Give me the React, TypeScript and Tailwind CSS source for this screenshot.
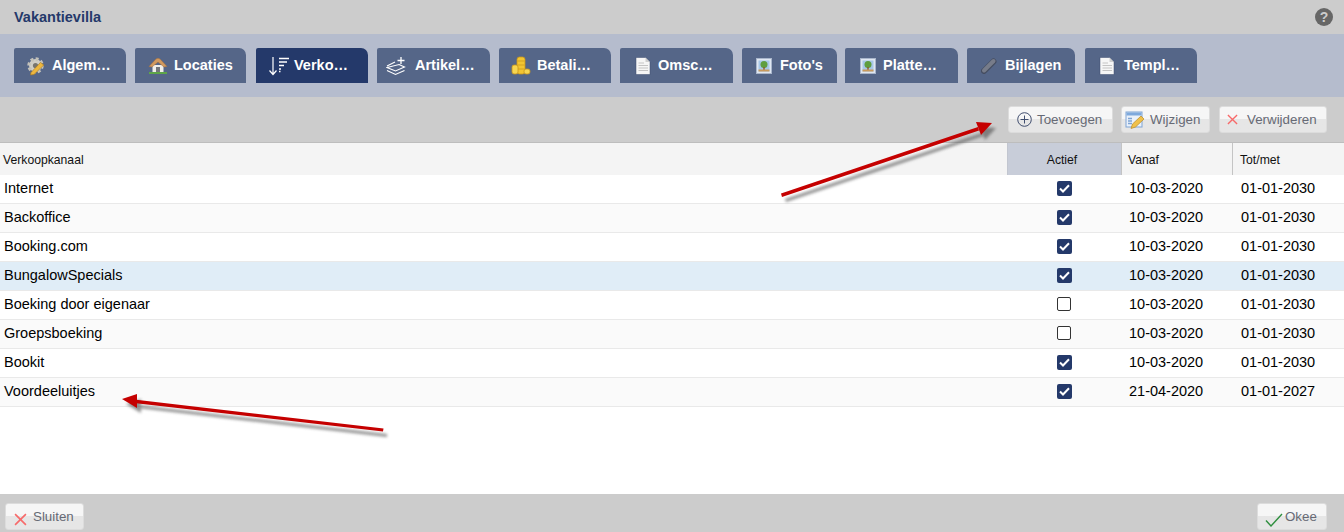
import type { ReactNode } from 'react'

const NAVY = '#24396a'

function Gear() {
  return (
    <svg width="20" height="20" viewBox="0 0 20 20">
      <circle cx="9.5" cy="9.5" r="6.5" fill="#cfcdc6" stroke="#c4c2ba" strokeWidth="3.4" strokeDasharray="2.8 2.2" />
      <circle cx="9.5" cy="9.5" r="2.6" fill="#77756f" />
      <path d="M5 16.5 L14.5 6.5 L17.8 9 L8 18.5 L4.5 19 Z" fill="#edb73f" stroke="#a8781c" strokeWidth="0.6" />
    </svg>
  )
}

function House() {
  return (
    <svg width="20" height="20" viewBox="0 0 20 20">
      <path d="M4.5 9 H15.5 V16 H4.5 Z" fill="#f1efe9" />
      <path d="M8 11 H12 V16 H8 Z" fill="#74767a" />
      <path d="M1 10.5 L8 3 Q10 1.5 12 3 L19 10.5 L16 11 L10 6 L4 11 Z" fill="#d29a5e" stroke="#a9713a" strokeWidth="0.5" />
      <path d="M1 16 H19 V18 H1 Z" fill="#5ea548" />
    </svg>
  )
}

function SortLines() {
  return (
    <svg width="22" height="22" viewBox="0 0 22 22" fill="none" stroke="#fff" strokeWidth="1.2">
      <path d="M5 2 V19 M1.5 15.5 L5 19.5 L8.5 15.5" />
      <path d="M11 3.5 H21 M11 7 H19 M11 10.5 H16 M11 14 H13" strokeWidth="1.4" />
      <path d="M11 16.5 H12.5" strokeWidth="1.6" />
    </svg>
  )
}

function LayersPlus() {
  return (
    <svg width="20" height="20" viewBox="0 0 20 20" fill="none" stroke="#fff" strokeWidth="1.1">
      <path d="M1 10 L9 6 M13 8.5 L18.5 11 L9.5 15 L1 11.5 Z" />
      <path d="M1 14.5 L9.5 18.5 L18.5 14.5" />
      <path d="M15 1 V8 M11.5 4.5 H18.5" strokeWidth="1.3" />
    </svg>
  )
}

function Coins() {
  return (
    <svg width="20" height="20" viewBox="0 0 20 20">
      <rect x="6" y="1" width="8" height="17" rx="2.5" fill="#f3c531" stroke="#c8951a" strokeWidth="0.8" />
      <path d="M6.5 5 H13.5 M6.5 9 H13.5 M6.5 13 H13.5" stroke="#c8951a" strokeWidth="0.7" />
      <rect x="1" y="9" width="6" height="9" rx="2" fill="#f7d650" stroke="#c8951a" strokeWidth="0.8" />
      <rect x="13" y="13" width="6" height="5" rx="2" fill="#f7d650" stroke="#c8951a" strokeWidth="0.8" />
    </svg>
  )
}

function Doc() {
  return (
    <svg width="16" height="18" viewBox="0 0 16 18">
      <path d="M1 0.5 H10.5 L15 5 V17.5 H1 Z" fill="#f6f6f6" stroke="#3d4c6e" strokeWidth="0.5" />
      <path d="M10.5 0.5 V5 H15 Z" fill="#cfcfcf" />
      <path d="M3.5 6 H9 M3.5 8.5 H13 M3.5 11 H13 M3.5 13.5 H13" stroke="#c4c4c4" strokeWidth="1" />
    </svg>
  )
}

function Picture() {
  return (
    <svg width="16" height="16" viewBox="0 0 16 16">
      <rect x="0.5" y="0.5" width="15" height="15" fill="#dfe7f2" stroke="#a9b6cb" />
      <rect x="2.5" y="2.5" width="11" height="11" fill="#a6c7e8" />
      <circle cx="8" cy="6.5" r="3.5" fill="#5f9e3f" />
      <rect x="7.3" y="9" width="1.4" height="3" fill="#8a5a2a" />
      <rect x="2.5" y="11.5" width="11" height="2" fill="#c99a5c" />
    </svg>
  )
}

function Clip() {
  return (
    <svg width="16" height="16" viewBox="0 0 16 16">
      <path d="M3 13 L12.5 3.5" stroke="#454d60" strokeWidth="6" strokeLinecap="round" />
      <path d="M3 12.5 L12.5 3" stroke="#777c8a" strokeWidth="4" strokeLinecap="round" />
    </svg>
  )
}

function PlusCircle() {
  return (
    <svg width="15" height="15" viewBox="0 0 15 15" fill="none" stroke="#3f4d6e" strokeWidth="1">
      <circle cx="7.5" cy="7.5" r="6.8" />
      <path d="M7.5 3.5 V11.5 M3.5 7.5 H11.5" />
    </svg>
  )
}

function EditForm() {
  return (
    <svg width="20" height="20" viewBox="0 0 20 20">
      <rect x="1" y="2" width="16" height="15" fill="#eaf1fa" stroke="#7ea4d4" />
      <rect x="1.5" y="2.5" width="15" height="3" fill="#7ea9dc" />
      <path d="M3 8.5 H7 M3 11 H7 M3 13.5 H7" stroke="#7ea4d4" strokeWidth="1.4" />
      <path d="M6 18.5 L7.5 14 L16 6 L19 9 L10.5 17 Z" fill="#f0c14a" stroke="#b98a24" strokeWidth="0.7" />
    </svg>
  )
}

function Cross({ size = 11 }: { size?: number }) {
  return (
    <svg width={size} height={size} viewBox="0 0 12 12" fill="none" stroke="#f76a6a" strokeWidth="1.5">
      <path d="M1 1 L11 11 M11 1 L1 11" />
    </svg>
  )
}

function Tick() {
  return (
    <svg width="18" height="14" viewBox="0 0 18 14" fill="none" stroke="#2f8f3f" strokeWidth="1.4">
      <path d="M1 7.5 L6 13 L17 1" />
    </svg>
  )
}

type Tab = {
  label: string
  icon: ReactNode
  tabClass: string
  iconClass: string
  active?: boolean
}

const tabs: Tab[] = [
  { label: 'Algem…', icon: <Gear />, tabClass: 'w-[112px]', iconClass: 'w-[38px] pl-[12px]' },
  { label: 'Locaties', icon: <House />, tabClass: 'w-[111px] ml-[9px]', iconClass: 'w-[39px] pl-[13px]' },
  { label: 'Verko…', icon: <SortLines />, tabClass: 'w-[112px] ml-[10px]', iconClass: 'w-[38px] pl-[12px]', active: true },
  { label: 'Artikel…', icon: <LayersPlus />, tabClass: 'w-[113px] ml-[9px]', iconClass: 'w-[38px] pl-[9px]' },
  { label: 'Betali…', icon: <Coins />, tabClass: 'w-[112px] ml-[9px]', iconClass: 'w-[38px] pl-[12px]' },
  { label: 'Omsc…', icon: <Doc />, tabClass: 'w-[113px] ml-[9px]', iconClass: 'w-[38px] pl-[15px]' },
  { label: "Foto's", icon: <Picture />, tabClass: 'w-[95px] ml-[9px]', iconClass: 'w-[38px] pl-[14px]' },
  { label: 'Platte…', icon: <Picture />, tabClass: 'w-[113px] ml-[8px]', iconClass: 'w-[38px] pl-[15px]' },
  { label: 'Bijlagen', icon: <Clip />, tabClass: 'w-[108px] ml-[9px]', iconClass: 'w-[38px] pl-[14px]' },
  { label: 'Templ…', icon: <Doc />, tabClass: 'w-[112px] ml-[10px]', iconClass: 'w-[39px] pl-[14px]' },
]

const rows = [
  { name: 'Internet', on: true, from: '10-03-2020', to: '01-01-2030' },
  { name: 'Backoffice', on: true, from: '10-03-2020', to: '01-01-2030' },
  { name: 'Booking.com', on: true, from: '10-03-2020', to: '01-01-2030' },
  { name: 'BungalowSpecials', on: true, from: '10-03-2020', to: '01-01-2030', hi: true },
  { name: 'Boeking door eigenaar', on: false, from: '10-03-2020', to: '01-01-2030' },
  { name: 'Groepsboeking', on: false, from: '10-03-2020', to: '01-01-2030' },
  { name: 'Bookit', on: true, from: '10-03-2020', to: '01-01-2030' },
  { name: 'Voordeeluitjes', on: true, from: '21-04-2020', to: '01-01-2027' },
]

function Button({ children, className }: { children: ReactNode; className: string }) {
  return (
    <button
      className={`flex h-[27px] items-center rounded-[3px] border border-[#dcdcdc] bg-gradient-to-b from-[#f6f6f6] from-50% to-[#e6e6e6] to-50% text-[13.33px] text-[#666a75] ${className}`}
    >
      {children}
    </button>
  )
}

function Check({ on }: { on: boolean }) {
  if (!on) {
    return <span className="block h-[14px] w-[14px] rounded-[2px] border border-[#333] bg-white" />
  }
  return (
    <span className="flex h-[15px] w-[15px] items-center justify-center rounded-[2px] bg-[#24396a]">
      <svg width="11" height="9" viewBox="0 0 11 9" fill="none" stroke="#fff" strokeWidth="2">
        <path d="M1 4.5 L4 7.5 L10 1.2" />
      </svg>
    </span>
  )
}

function Arrows() {
  return (
    <svg className="pointer-events-none absolute left-0 top-0" width="1344" height="532">
      <defs>
        <filter id="soft" x="-20%" y="-60%" width="140%" height="220%">
          <feGaussianBlur stdDeviation="1.8" />
        </filter>
      </defs>
      <g fill="#555" opacity="0.65" filter="url(#soft)" transform="translate(4 5)">
        <path d="M781 194 L978 128 L979 131 L782 197 Z" />
        <path d="M992 123 L976 122 L981 135 Z" />
        <path d="M383 429 L134 400 L134 403 L383 432 Z" />
        <path d="M122 399 L137 394 L137 408 Z" />
      </g>
      <g fill="#c50000">
        <path d="M781 193.5 L978 127 L979 130.5 L782 197 Z" />
        <path d="M992 123 L976 122 L981 135 Z" />
        <path d="M383.5 428.5 L134 399.5 L134 403 L383 431.5 Z" />
        <path d="M122 399 L137 394 L137 408 Z" />
      </g>
    </svg>
  )
}

export default function App() {
  return (
    <div className="relative flex h-[532px] w-[1344px] flex-col overflow-hidden bg-white font-['Liberation_Sans',Arial,sans-serif] text-[14.5px] text-black">
      <div className="flex h-[34px] items-center justify-between bg-[#cccccc] pl-[14px] pr-[11px]">
        <span className="pt-[2px] text-[14.5px] font-bold" style={{ color: NAVY }}>Vakantievilla</span>
        <span className="flex h-[18px] w-[18px] items-center justify-center rounded-full bg-[#666666] text-[14px] font-bold leading-none text-[#cccccc]">?</span>
      </div>

      <div className="flex h-[63px] items-start bg-[#b5bccd] pl-[14px] pt-[14px]">
        {tabs.map((t) => (
          <div
            key={t.label}
            className={`flex h-[35px] items-center rounded-tl-[2px] rounded-tr-[7px] text-[14.5px] font-bold text-white ${t.tabClass} ${t.active ? 'bg-[#24396a]' : 'bg-[#556688]'}`}
          >
            <span className={`flex shrink-0 items-center ${t.iconClass}`}>{t.icon}</span>
            <span className="whitespace-nowrap">{t.label}</span>
          </div>
        ))}
      </div>

      <div className="flex h-[46px] items-start justify-end border-b border-[#bdbdbd] bg-[#cccccc] pr-[17px] pt-[9px]">
        <Button className="w-[105px] pl-[8px]">
          <PlusCircle />
          <span className="ml-[5px]">Toevoegen</span>
        </Button>
        <Button className="ml-[8px] w-[89px] pl-[3px]">
          <EditForm />
          <span className="ml-[5px]">Wijzigen</span>
        </Button>
        <Button className="ml-[9px] w-[108px] pl-[7px]">
          <Cross />
          <span className="ml-[9px]">Verwijderen</span>
        </Button>
      </div>

      <div className="flex h-[32px] bg-[#f4f4f4] text-[12.2px] leading-[34px] text-[#111]">
        <div className="w-[1007px] pl-[3px]">Verkoopkanaal</div>
        <div className="w-[114px] border-l border-[#c2c6d0] bg-[#c8cdd9] pr-[5px] text-center">Actief</div>
        <div className="w-[111px] border-l border-[#c4c4c4] pl-[6px]">Vanaf</div>
        <div className="w-[112px] border-l border-[#c4c4c4] pl-[7px]">Tot/met</div>
      </div>

      <div className="flex-1">
        {rows.map((r, i) => (
          <div
            key={r.name}
            className={`flex h-[29px] items-center border-b border-[#e9e9e9] pb-[2px] ${r.hi ? 'bg-[#e0edf7]' : i % 2 === 1 ? 'bg-[#fafafa]' : 'bg-white'}`}
          >
            <div className="w-[1007px] pl-[4px] pt-[2px]">{r.name}</div>
            <div className="flex w-[114px] justify-center">
              <Check on={r.on} />
            </div>
            <div className="w-[112px] pl-[8px] pt-[2px]">{r.from}</div>
            <div className="w-[111px] pl-[8px] pt-[2px]">{r.to}</div>
          </div>
        ))}
      </div>

      <div className="flex h-[38px] items-start justify-between bg-[#cccccc] pl-[5px] pr-[17px] pt-[9px]">
        <Button className="w-[79px] pl-[8px]">
          <span className="mt-[5px]"><Cross size={13} /></span>
          <span className="ml-[6px]">Sluiten</span>
        </Button>
        <Button className="w-[70px] pl-[7px]">
          <span className="mt-[6px]"><Tick /></span>
          <span className="ml-[2px]">Okee</span>
        </Button>
      </div>

      <Arrows />
    </div>
  )
}
